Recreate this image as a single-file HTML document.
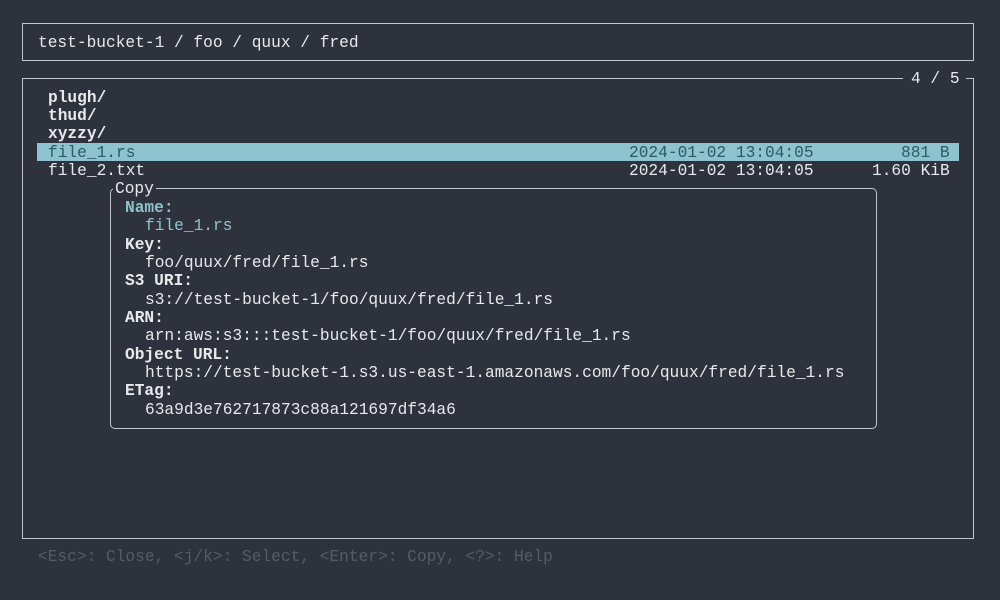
<!DOCTYPE html>
<html><head><meta charset="utf-8"><style>
html,body{margin:0;padding:0;background:#2e323c;width:1000px;height:600px;overflow:hidden}
body{position:relative;font-family:"Liberation Mono","DejaVu Sans Mono",monospace;font-size:16.2px;color:#e8e9ec}
.t{position:absolute;white-space:pre;line-height:18px;height:18px;margin-top:1px}
.b{font-weight:bold}
.box{position:absolute;border:1.5px solid #c3c6cc;box-sizing:border-box}
.teal{color:#8fc3cc}
</style></head><body>
<div class="box" style="left:22px;top:23px;width:952px;height:38px"></div>
<div class="t" style="left:38px;top:33px">test-bucket-1 / foo / quux / fred</div>

<div class="box" style="left:22px;top:78px;width:952px;height:461px"></div>
<div class="t" style="left:903px;top:69px;background:#2e323c;padding:0 6px 0 8px">4 / 5</div>

<div class="t b" style="left:48px;top:88px">plugh/</div>
<div class="t b" style="left:48px;top:106px">thud/</div>
<div class="t b" style="left:48px;top:124px">xyzzy/</div>
<div style="position:absolute;left:37px;top:143px;width:922px;height:18px;background:#8cc3ce"></div>
<div class="t" style="left:48px;top:143px;color:#2d5a66">file_1.rs</div>
<div class="t" style="left:629px;top:143px;color:#2d5a66">2024-01-02 13:04:05</div>
<div class="t" style="left:901px;top:143px;color:#2d5a66">881 B</div>
<div class="t" style="left:48px;top:161px">file_2.txt</div>
<div class="t" style="left:629px;top:161px">2024-01-02 13:04:05</div>
<div class="t" style="left:872px;top:161px">1.60 KiB</div>

<div class="box" style="left:110px;top:188px;width:767px;height:241px;border-radius:5px;background:#2e323c"></div>
<div class="t" style="left:113px;top:179px;background:#2e323c;padding:0 2px">Copy</div>
<div class="t b teal" style="left:125px;top:198px">Name:</div>
<div class="t teal" style="left:145px;top:216px">file_1.rs</div>
<div class="t b" style="left:125px;top:235px">Key:</div>
<div class="t" style="left:145px;top:253px">foo/quux/fred/file_1.rs</div>
<div class="t b" style="left:125px;top:271px">S3 URI:</div>
<div class="t" style="left:145px;top:290px">s3://test-bucket-1/foo/quux/fred/file_1.rs</div>
<div class="t b" style="left:125px;top:308px">ARN:</div>
<div class="t" style="left:145px;top:326px">arn:aws:s3:::test-bucket-1/foo/quux/fred/file_1.rs</div>
<div class="t b" style="left:125px;top:345px">Object URL:</div>
<div class="t" style="left:145px;top:363px">https://test-bucket-1.s3.us-east-1.amazonaws.com/foo/quux/fred/file_1.rs</div>
<div class="t b" style="left:125px;top:381px">ETag:</div>
<div class="t" style="left:145px;top:400px">63a9d3e762717873c88a121697df34a6</div>

<div class="t" style="left:38px;top:547px;color:#555b67">&lt;Esc&gt;: Close, &lt;j/k&gt;: Select, &lt;Enter&gt;: Copy, &lt;?&gt;: Help</div>
</body></html>
